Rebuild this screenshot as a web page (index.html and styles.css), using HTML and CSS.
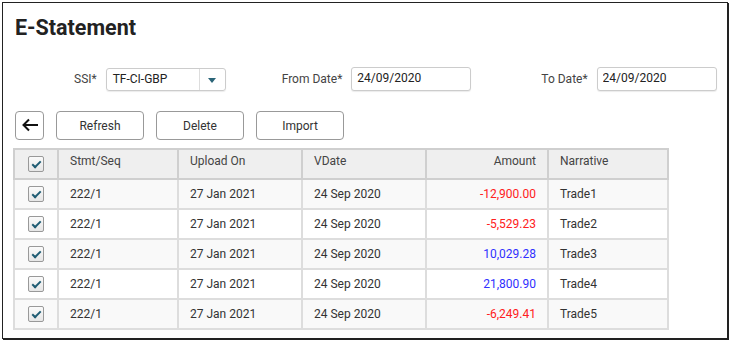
FILE: index.html
```html
<!DOCTYPE html>
<html lang="en">
<head>
    <meta charset="UTF-8">
    <meta name="viewport" content="width=device-width, initial-scale=1.0">
    <title>E-Statement</title>
    <link rel="stylesheet" href="styles.css">
</head>
<body>
    <div class="panel">
        <h1>E-Statement</h1>

        <div class="filters">
            <label class="field ssi">
                <span class="label">SSI*</span>
                <span class="select">
                    <span class="select-value">TF-CI-GBP</span>
                    <span class="select-arrow"></span>
                </span>
            </label>
            <label class="field from">
                <span class="label">From Date*</span>
                <input class="input" type="text" value="24/09/2020">
            </label>
            <label class="field to">
                <span class="label">To Date*</span>
                <input class="input" type="text" value="24/09/2020">
            </label>
        </div>

        <div class="toolbar">
            <button class="btn back" title="Back">
                <svg width="18" height="14" viewBox="0 0 18 14">
                    <path d="M17 7H2.5M8 1.5L2.5 7L8 12.5" fill="none" stroke="#111" stroke-width="2"/>
                </svg>
            </button>
            <button class="btn">Refresh</button>
            <button class="btn">Delete</button>
            <button class="btn">Import</button>
        </div>

        <table class="grid">
            <colgroup>
                <col style="width: 44px">
                <col style="width: 120px">
                <col style="width: 124px">
                <col style="width: 124px">
                <col style="width: 122px">
                <col style="width: 120px">
            </colgroup>
            <thead>
                <tr>
                    <th class="chk"><span class="checkbox"></span></th>
                    <th>Stmt/Seq</th>
                    <th>Upload On</th>
                    <th>VDate</th>
                    <th class="num">Amount</th>
                    <th>Narrative</th>
                </tr>
            </thead>
            <tbody>
                <tr>
                    <td class="chk"><span class="checkbox"></span></td>
                    <td>222/1</td>
                    <td>27 Jan 2021</td>
                    <td>24 Sep 2020</td>
                    <td class="num neg">-12,900.00</td>
                    <td>Trade1</td>
                </tr>
                <tr>
                    <td class="chk"><span class="checkbox"></span></td>
                    <td>222/1</td>
                    <td>27 Jan 2021</td>
                    <td>24 Sep 2020</td>
                    <td class="num neg">-5,529.23</td>
                    <td>Trade2</td>
                </tr>
                <tr>
                    <td class="chk"><span class="checkbox"></span></td>
                    <td>222/1</td>
                    <td>27 Jan 2021</td>
                    <td>24 Sep 2020</td>
                    <td class="num pos">10,029.28</td>
                    <td>Trade3</td>
                </tr>
                <tr>
                    <td class="chk"><span class="checkbox"></span></td>
                    <td>222/1</td>
                    <td>27 Jan 2021</td>
                    <td>24 Sep 2020</td>
                    <td class="num pos">21,800.90</td>
                    <td>Trade4</td>
                </tr>
                <tr>
                    <td class="chk"><span class="checkbox"></span></td>
                    <td>222/1</td>
                    <td>27 Jan 2021</td>
                    <td>24 Sep 2020</td>
                    <td class="num neg">-6,249.41</td>
                    <td>Trade5</td>
                </tr>
            </tbody>
        </table>
    </div>
</body>
</html>
```

FILE: styles.css
```css
body {
    margin: 0;
    font-family: Roboto, "Liberation Sans", sans-serif;
    font-size: 12px;
    color: #333;
    background: #fff;
}

.panel {
    margin: 2px;
    width: 726px;
    height: 337px;
    box-sizing: border-box;
    border: 1px solid #222;
    box-shadow: 1px 1px 0 #222;
    padding: 0 0 0 10px;
}

h1 {
    margin: 0;
    padding-top: 12px;
    padding-left: 2px;
    font-size: 21.5px;
    font-weight: bold;
    color: #222;
    line-height: 26px;
}

/* filter row */
.filters {
    display: flex;
    align-items: center;
    margin-top: 26px;
    height: 24px;
}

.field {
    display: flex;
    align-items: center;
}

.label {
    color: #444;
    margin-right: 9px;
}

.ssi {
    margin-left: 61px;
}

.from {
    margin-left: 56px;
}

.to {
    margin-left: 70px;
}

.select {
    display: flex;
    width: 120px;
    height: 23px;
    box-sizing: border-box;
    border: 1px solid #ccc;
    border-radius: 3px;
    box-shadow: 0 1px 1px rgba(0, 0, 0, 0.08);
}

.select-value {
    flex: 1;
    padding-left: 6px;
    line-height: 21px;
    color: #222;
}

.select-arrow {
    width: 25px;
    border-left: 1px solid #ddd;
    position: relative;
}

.select-arrow::after {
    content: "";
    position: absolute;
    left: 8px;
    top: 9px;
    border-left: 4px solid transparent;
    border-right: 4px solid transparent;
    border-top: 5px solid #2a6478;
}

.input {
    width: 120px;
    height: 24px;
    box-sizing: border-box;
    border: 1px solid #ccc;
    border-radius: 3px;
    box-shadow: 0 1px 1px rgba(0, 0, 0, 0.08);
    padding: 0 0 3px 5px;
    font-family: inherit;
    font-size: 12px;
    color: #222;
}

/* toolbar */
.toolbar {
    display: flex;
    gap: 12px;
    margin-top: 20px;
    margin-left: 2px;
}

.btn {
    width: 88px;
    height: 29px;
    box-sizing: border-box;
    background: #fff;
    border: 1px solid #999;
    border-radius: 4px;
    font-family: inherit;
    font-size: 12px;
    color: #333;
    padding: 0;
}

.btn.back {
    width: 29px;
    padding: 2px 0 0;
}

/* grid */
.grid {
    margin-top: 8px;
    border-collapse: collapse;
    table-layout: fixed;
    width: 654px;
}

.grid th,
.grid td {
    height: 28px;
    padding: 0 11px;
    border: 2px solid #ddd;
    text-align: left;
    font-weight: normal;
    white-space: nowrap;
    vertical-align: middle;
}

.grid th {
    background: #efefef;
    border-color: #cfcfcf;
    color: #444;
    vertical-align: top;
    padding-top: 4px;
    height: 24px;
}

.grid tbody tr:nth-child(odd) td {
    background: #f9f9f9;
}

.grid .chk {
    text-align: center;
    padding: 0;
    vertical-align: middle;
}

.grid .num {
    text-align: right;
}

.neg { color: #ff2020; }
.pos { color: #3030ff; }

.checkbox {
    display: inline-block;
    width: 16px;
    height: 16px;
    box-sizing: border-box;
    border: 1px solid #999;
    border-radius: 2px;
    background: linear-gradient(#fafafa, #e6e6e6);
    position: relative;
    vertical-align: middle;
}

.checkbox::after {
    content: "";
    position: absolute;
    left: 5px;
    top: 2px;
    width: 3px;
    height: 7px;
    border-right: 2px solid #1f5c73;
    border-bottom: 2px solid #1f5c73;
    transform: rotate(45deg);
}
```
